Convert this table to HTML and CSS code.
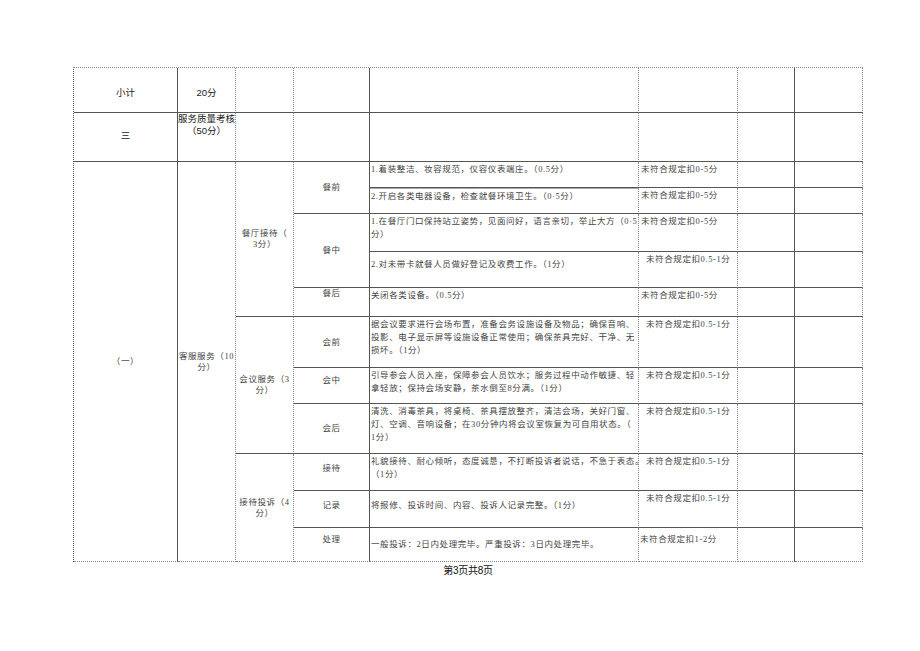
FILE: index.html
```html
<!DOCTYPE html>
<html lang="zh-CN">
<head>
<meta charset="utf-8">
<title>服务质量考核</title>
<link rel="stylesheet" href="styles.css">
</head>
<body>
<div class="page">
  <div class="sheet">
    <!-- row 1 -->
    <div class="cell head">小计</div>
    <div class="cell head dr">20分</div>
    <div class="cell dr"></div>
    <div class="cell"></div>
    <div class="cell dr"></div>
    <div class="cell dr"></div>
    <div class="cell"></div>
    <div class="cell dlast"></div>
    <!-- row 2 -->
    <div class="cell head hm">三</div>
    <div class="cell head top dr">服务质量考核<br>（50分）</div>
    <div class="cell dr"></div>
    <div class="cell"></div>
    <div class="cell dr"></div>
    <div class="cell dr"></div>
    <div class="cell"></div>
    <div class="cell dlast"></div>
    <!-- row 3 -->
    <div class="cell lbl rs11 dbot">（一）</div>
    <div class="cell lbl rs11 dr dbot">客服服务（10<br>分）</div>
    <div class="cell lbl rs5 dr">餐厅接待（<br>3分）</div>
    <div class="cell lbl rs2">餐前</div>
    <div class="cell txt dr">1.着装整洁、妆容规范，仪容仪表端庄。（0.5分）</div>
    <div class="cell ded dr">未符合规定扣0-5分</div>
    <div class="cell"></div>
    <div class="cell dlast"></div>
    <!-- row 4 -->
    <div class="cell txt dr gt">2.开启各类电器设备，检查就餐环境卫生。（0·5分）</div>
    <div class="cell ded dr">未符合规定扣0-5分</div>
    <div class="cell"></div>
    <div class="cell dlast"></div>
    <!-- row 5 -->
    <div class="cell lbl rs2">餐中</div>
    <div class="cell txt dr">1.在餐厅门口保持站立姿势，见面问好，语言亲切，举止大方（0·5<br>分）</div>
    <div class="cell ded dr">未符合规定扣0-5分</div>
    <div class="cell"></div>
    <div class="cell dlast"></div>
    <!-- row 6 -->
    <div class="cell txt dr pt6">2.对未带卡就餐人员做好登记及收费工作。（1分）</div>
    <div class="cell ded in dr">未符合规定扣0.5-1分</div>
    <div class="cell"></div>
    <div class="cell dlast"></div>
    <!-- row 7 -->
    <div class="cell lbl lt">餐后</div>
    <div class="cell txt dr">关闭各类设备。（0.5分）</div>
    <div class="cell ded dr">未符合规定扣0-5分</div>
    <div class="cell"></div>
    <div class="cell dlast"></div>
    <!-- row 8 -->
    <div class="cell lbl rs3 dr">会议服务（3<br>分）</div>
    <div class="cell lbl">会前</div>
    <div class="cell txt dr">据会议要求进行会场布置，准备会务设施设备及物品；确保音响、<br>投影、电子显示屏等设施设备正常使用；确保茶具完好、干净、无<br>损坏。（1分）</div>
    <div class="cell ded in dr">未符合规定扣0.5-1分</div>
    <div class="cell"></div>
    <div class="cell dlast"></div>
    <!-- row 9 -->
    <div class="cell lbl up10">会中</div>
    <div class="cell txt dr">引导参会人员入座，保障参会人员饮水；服务过程中动作敏捷、轻<br>拿轻放；保持会场安静，茶水倒至8分满。（1分）</div>
    <div class="cell ded in dr">未符合规定扣0.5-1分</div>
    <div class="cell"></div>
    <div class="cell dlast"></div>
    <!-- row 10 -->
    <div class="cell lbl">会后</div>
    <div class="cell txt dr">清洗、消毒茶具，将桌椅、茶具摆放整齐，清洁会场，关好门窗、<br>灯、空调、音响设备；在30分钟内将会议室恢复为可自用状态。（<br>1分）</div>
    <div class="cell ded in dr">未符合规定扣0.5-1分</div>
    <div class="cell"></div>
    <div class="cell dlast"></div>
    <!-- row 11 -->
    <div class="cell lbl rs3 dr dbot">接待投诉（4<br>分）</div>
    <div class="cell lbl up8">接待</div>
    <div class="cell txt dr">礼貌接待、耐心倾听，态度诚恳，不打断投诉者说话，不急于表态。<br>（1分）</div>
    <div class="cell ded in dr">未符合规定扣0.5-1分</div>
    <div class="cell"></div>
    <div class="cell dlast"></div>
    <!-- row 12 -->
    <div class="cell lbl up8">记录</div>
    <div class="cell txt dr pt8">将报修、投诉时间、内容、投诉人记录完整。（1分）</div>
    <div class="cell ded in dr">未符合规定扣0.5-1分</div>
    <div class="cell"></div>
    <div class="cell dlast"></div>
    <!-- row 13 -->
    <div class="cell lbl up10 dbot">处理</div>
    <div class="cell txt dr pt10 dbot">一般投诉：2日内处理完毕。严重投诉：3日内处理完毕。</div>
    <div class="cell ded dr pt5 dbot">未符合规定扣1-2分</div>
    <div class="cell dbot"></div>
    <div class="cell dlast dbot"></div>
  </div>
  <div class="footer">第3页共8页</div>
</div>
</body>
</html>
```

FILE: styles.css
```css
* { box-sizing: border-box; }

html, body {
  margin: 0;
  padding: 0;
  background: #ffffff;
}

.page {
  padding: 67px 0 0 73px;
  width: 920px;
}

.sheet {
  display: grid;
  width: 790px;
  grid-template-columns: 104px 58px 58px 76px 269px 99px 57px 68px;
  grid-template-rows: 45px 49px 26px 26px 38px 36px 29px 51px 36px 50px 37px 37px 34px;
  border-left: 1px dotted #555;
  border-top: 1px dotted #8a808a;
}

.cell {
  border-right: 1px solid #555;
  border-bottom: 1px solid #555;
  font-family: "Liberation Serif", "Noto Sans CJK SC", serif;
  font-size: 8.5px;
  letter-spacing: 0.6px;
  line-height: 13px;
  color: #444;
  white-space: nowrap;
  overflow: visible;
}

.dr { border-right: 1px dotted #8a808a; }
.dlast { border-right: 1px dotted #8a808a; }
.dbot { border-bottom: 1px dotted #8a808a; }
.gt { border-top: 1px solid #aaa; }

.rs2 { grid-row: span 2; }
.rs3 { grid-row: span 3; }
.rs5 { grid-row: span 5; }
.rs11 { grid-row: span 11; }

.head {
  font-family: "Liberation Sans", "Noto Sans CJK SC", sans-serif;
  font-size: 9.5px;
  letter-spacing: 0;
  line-height: 12px;
  color: #1a1a1a;
  display: flex;
  align-items: center;
  justify-content: center;
  text-align: center;
  padding-top: 5px;
}
.head.hm { padding-top: 0; padding-bottom: 3px; }
.head.top {
  align-items: flex-start;
  padding-top: 0;
}

.lbl {
  display: flex;
  align-items: center;
  justify-content: center;
  text-align: center;
  line-height: 11px;
}
.lbl.lt { align-items: flex-start; padding-top: 0; }
.lbl.up8 { padding-bottom: 8px; }
.lbl.up10 { padding-bottom: 10px; }

.txt {
  padding: 1px 0 0 1px;
}
.pt5 { padding-top: 5px; }
.pt6 { padding-top: 6px; }
.pt8 { padding-top: 8px; }
.pt10 { padding-top: 10px; }

.ded {
  padding: 1px 0 0 2px;
}
.ded.in { padding-left: 7px; }
.ded.pt5 { padding-top: 5px; padding-left: 1px; }

.footer {
  width: 790px;
  text-align: center;
  font-family: "Liberation Sans", "Noto Sans CJK SC", sans-serif;
  font-size: 10px;
  line-height: 12px;
  color: #111;
  margin-top: 3px;
  letter-spacing: -0.3px;
}
```
